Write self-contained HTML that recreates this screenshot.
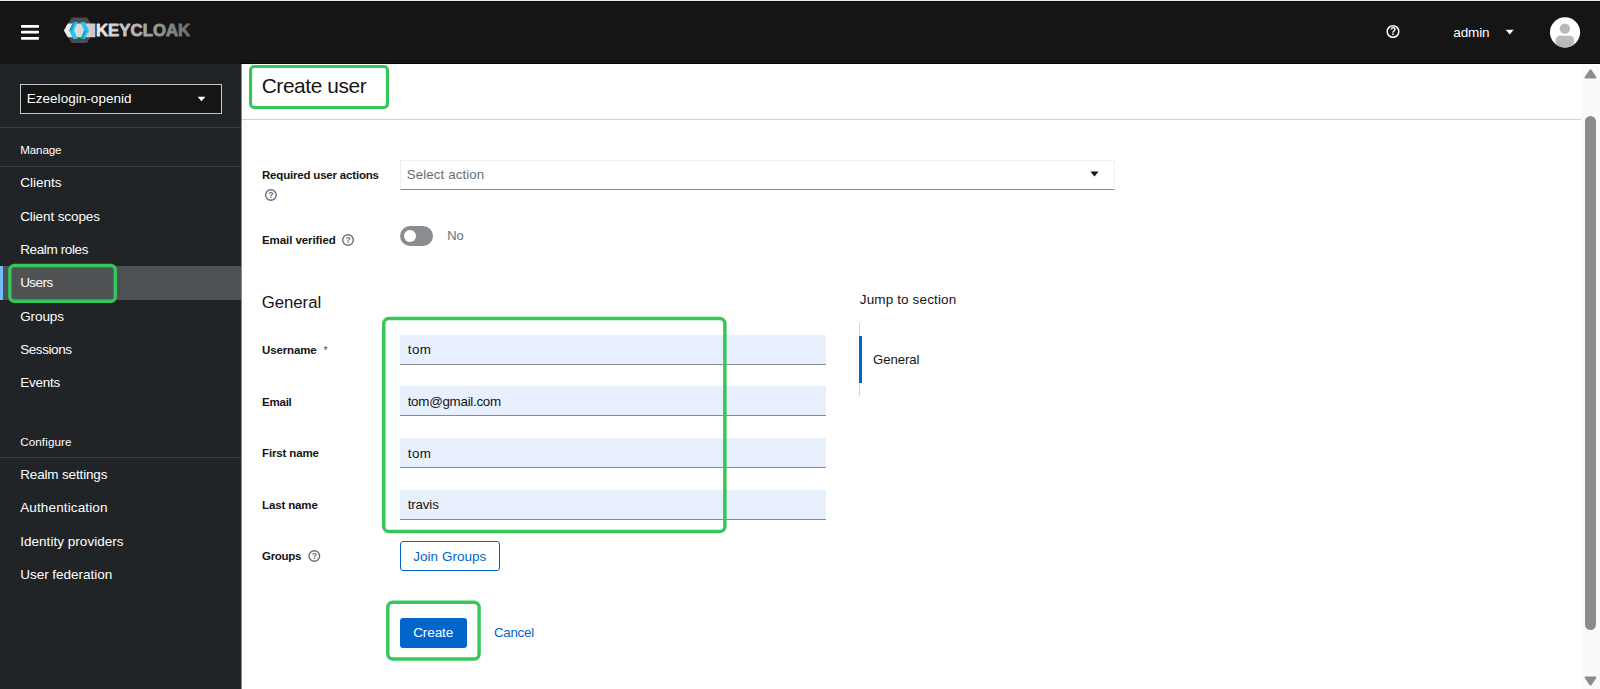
<!DOCTYPE html>
<html lang="en">
<head>
<meta charset="utf-8">
<title>Create user - Keycloak</title>
<style>
*{box-sizing:border-box;margin:0;padding:0}
html,body{width:1600px;height:689px;overflow:hidden;background:#fff;font-family:"Liberation Sans",sans-serif;color:#151515}
.abs{position:absolute}
.t{position:absolute;white-space:nowrap;line-height:1;font-family:"Liberation Sans",sans-serif}
.hr{position:absolute;left:0;width:241px;height:1px;background:#3c3f42}
.inp{position:absolute;left:400px;width:425.5px;height:30px;background:#e8f0fe;border-bottom:1px solid #8a8d90}
svg{position:absolute;overflow:visible}
</style>
</head>
<body>
<div class="abs" style="left:0;top:0;width:1600px;height:1px;background:#ececec"></div>
<div class="abs" style="left:0;top:1px;width:1600px;height:1px;background:#090909;z-index:1"></div>
<div class="abs" style="left:0;top:1px;width:1600px;height:62.5px;background:#151515"></div>
<div class="abs" style="left:241px;top:63px;width:1359px;height:1px;background:#040404"></div>
<div class="abs" style="left:0;top:63.5px;width:241px;height:626px;background:#212427"></div>
<div class="abs" style="left:241px;top:64px;width:1px;height:625px;background:#8a8a8a"></div>

<!-- hamburger + logo + header right, drawn in page coordinates -->
<svg style="left:0;top:0" width="1600" height="64" viewBox="0 0 1600 64">
<defs>
<linearGradient id="lg" gradientUnits="userSpaceOnUse" x1="96" x2="191" y1="0" y2="0"><stop offset="0" stop-color="#ececec"/><stop offset="0.35" stop-color="#bdbdbd"/><stop offset="0.7" stop-color="#8f8f8f"/><stop offset="1" stop-color="#6a6a6a"/></linearGradient>
<linearGradient id="bandg" gradientUnits="userSpaceOnUse" x1="64" x2="96" y1="0" y2="0"><stop offset="0" stop-color="#f2f2f2"/><stop offset="0.5" stop-color="#d8d8d8"/><stop offset="1" stop-color="#c6c6c6"/></linearGradient>
<clipPath id="av"><circle cx="1565.05" cy="32.35" r="15.1"/></clipPath>
</defs>
<rect x="21" y="25" width="18" height="2.8" rx="0.8" fill="#fff"/>
<rect x="21" y="30.8" width="18" height="2.8" rx="0.8" fill="#fff"/>
<rect x="21" y="37" width="18" height="2.8" rx="0.8" fill="#fff"/>
<polygon points="64.2,30.3 71.7,17.6 87,17.6 94.4,30.3 87,43 71.7,43" fill="#4c4c4c"/>
<polygon points="63.9,30.4 67.8,23.6 95.4,23.6 95.4,37.2 67.8,37.2" fill="url(#bandg)"/>
<polygon points="73.3,21.9 77.5,21.9 74.1,30.5 77.5,39 73.3,39 69.1,30.5" fill="#2cc4ea"/>
<polygon points="73.3,21.9 75.3,21.9 71.5,30.5 69.1,30.5" fill="#0b9fc8"/>
<polygon points="80.5,21.9 84.7,21.9 89.1,30.5 84.7,39 80.5,39 84.2,30.5" fill="#2cc4ea"/>
<polygon points="84.2,30.5 86.6,30.5 82.6,39 80.5,39" fill="#0b9fc8"/>
<text x="96" y="36.3" font-family="Liberation Sans, sans-serif" font-weight="bold" font-size="16.6" fill="url(#lg)" stroke="url(#lg)" stroke-width="0.8" stroke-linejoin="round" textLength="94.2" lengthAdjust="spacingAndGlyphs">KEYCLOAK</text>
<circle cx="1393" cy="31.5" r="5.8" fill="none" stroke="#fff" stroke-width="1.5"/>
<text x="1393" y="35.2" text-anchor="middle" font-family="Liberation Sans, sans-serif" font-weight="bold" font-size="10" fill="#fff">?</text>
<polygon points="1505.7,29.8 1513.7,29.8 1509.7,34.4" fill="#fff"/>
<circle cx="1565.05" cy="32.35" r="15.1" fill="#fff"/>
<g clip-path="url(#av)"><circle cx="1564.9" cy="28.6" r="5.2" fill="#b9b9b9"/><path d="M1555.7 48 v-8 a4.2 4.2 0 0 1 4.2 -4.2 h10 a4.2 4.2 0 0 1 4.2 4.2 v8z" fill="#bbbbbb"/><path d="M1558.6 48 l1.6 -5.5 M1571.2 48 l-1.6 -5.5" stroke="#adadad" stroke-width="0.9" fill="none"/></g>
</svg>

<!-- realm selector -->
<div class="abs" style="left:20px;top:84px;width:201.5px;height:30px;background:#151515;border:1px solid #c4c6c8"></div>
<svg style="left:197px;top:96px" width="9" height="6" viewBox="0 0 9 6"><polygon points="0.6,0.7 8.4,0.7 4.5,5.2" fill="#fff"/></svg>

<div class="hr" style="top:127px"></div>
<div class="hr" style="top:166px"></div>
<div class="abs" style="left:0;top:266px;width:241px;height:34px;background:#4f5255"></div>
<div class="abs" style="left:0;top:266px;width:3px;height:34px;background:#73bcf7"></div>
<div class="hr" style="top:457px"></div>

<!-- content -->
<div class="abs" style="left:242px;top:119px;width:1339px;height:1px;background:#d2d2d2"></div>

<div class="abs" style="left:400px;top:160px;width:714.5px;height:30px;background:#fff;border:1px solid #f0f0f0;border-bottom:1px solid #8a8d90"></div>
<svg style="left:1090px;top:171px" width="9" height="6" viewBox="0 0 9 6"><polygon points="0.4,0.6 8.6,0.6 4.5,5.4" fill="#151515"/></svg>

<div class="abs" style="left:400px;top:226px;width:33px;height:20px;border-radius:10px;background:#8a8d90"></div>
<div class="abs" style="left:403.7px;top:230px;width:12px;height:12px;border-radius:6px;background:#fff"></div>

<div class="inp" style="top:335px"></div>
<div class="inp" style="top:386px"></div>
<div class="inp" style="top:438px"></div>
<div class="inp" style="top:490px"></div>

<div class="abs" style="left:400px;top:541.3px;width:100px;height:30px;border:1px solid #0066cc;border-radius:3px;background:#fff"></div>
<div class="abs" style="left:400px;top:618px;width:66.5px;height:30px;border-radius:3px;background:#0066cc"></div>

<!-- help icons -->
<svg style="left:0;top:0" width="400" height="600" viewBox="0 0 400 600">
<g fill="none" stroke="#6a6e73" stroke-width="1.4"><circle cx="270.9" cy="195" r="5.3"/><circle cx="348" cy="240" r="5.3"/><circle cx="314.3" cy="556" r="5.3"/></g>
<g font-family="Liberation Sans, sans-serif" font-weight="bold" font-size="8.6" fill="#6a6e73" text-anchor="middle"><text x="270.9" y="198.2">?</text><text x="348" y="243.2">?</text><text x="314.3" y="559.2">?</text></g>
</svg>

<!-- jump to section -->
<div class="abs" style="left:859px;top:323px;width:1px;height:73px;background:#d2d2d2"></div>
<div class="abs" style="left:859px;top:336.3px;width:3px;height:46.7px;background:#0066cc"></div>

<!-- scrollbar -->
<div class="abs" style="left:1581px;top:65px;width:19px;height:624px;background:#fafafa"></div>
<div class="abs" style="left:1585px;top:116px;width:11px;height:514px;border-radius:5.5px;background:#8b8b8b"></div>
<svg style="left:1584px;top:69px" width="13" height="10" viewBox="0 0 13 10"><path d="M1.8 8.4 L6.5 1.6 L11.2 8.4z" fill="#8b8b8b" stroke="#8b8b8b" stroke-width="2.4" stroke-linejoin="round"/></svg>
<svg style="left:1584px;top:676px" width="13" height="10" viewBox="0 0 13 10"><path d="M1.8 1.6 L6.5 8.2 L11.2 1.6z" fill="#8b8b8b" stroke="#8b8b8b" stroke-width="2.4" stroke-linejoin="round"/></svg>

<svg style="left:0;top:0" width="800" height="689" viewBox="0 0 800 689"><g fill="none" stroke="#34c759"><rect x="9.90" y="265.50" width="105.40" height="35.80" rx="4.5" ry="4.5" stroke-width="3.4"/><rect x="250.55" y="66.55" width="136.90" height="40.90" rx="3.5" ry="3.5" stroke-width="3.1"/><rect x="383.75" y="318.55" width="341.10" height="212.90" rx="5" ry="5" stroke-width="3.5"/><rect x="387.80" y="602.20" width="91.30" height="56.80" rx="5" ry="5" stroke-width="3.4"/></g></svg>
<div class="t" style="left:1453.30px;top:26.37px;font-size:13.5px;color:#ffffff;letter-spacing:-0.120px">admin</div>
<div class="t" style="left:26.70px;top:91.87px;font-size:13.5px;color:#ffffff;letter-spacing:0.037px">Ezeelogin-openid</div>
<div class="t" style="left:20.20px;top:144.18px;font-size:11.6px;color:#ffffff;letter-spacing:-0.121px">Manage</div>
<div class="t" style="left:20.20px;top:175.87px;font-size:13.5px;color:#ffffff;letter-spacing:0.006px">Clients</div>
<div class="t" style="left:20.20px;top:209.87px;font-size:13.5px;color:#ffffff;letter-spacing:-0.104px">Client scopes</div>
<div class="t" style="left:20.20px;top:242.57px;font-size:13.5px;color:#ffffff;letter-spacing:-0.373px">Realm roles</div>
<div class="t" style="left:20.20px;top:275.57px;font-size:13.5px;color:#ffffff;letter-spacing:-0.566px">Users</div>
<div class="t" style="left:20.20px;top:309.87px;font-size:13.5px;color:#ffffff;letter-spacing:-0.096px">Groups</div>
<div class="t" style="left:20.20px;top:342.57px;font-size:13.5px;color:#ffffff;letter-spacing:-0.426px">Sessions</div>
<div class="t" style="left:20.20px;top:375.87px;font-size:13.5px;color:#ffffff;letter-spacing:-0.236px">Events</div>
<div class="t" style="left:20.20px;top:435.88px;font-size:11.6px;color:#ffffff;letter-spacing:0.127px">Configure</div>
<div class="t" style="left:20.20px;top:467.57px;font-size:13.5px;color:#ffffff;letter-spacing:-0.154px">Realm settings</div>
<div class="t" style="left:20.20px;top:500.87px;font-size:13.5px;color:#ffffff;letter-spacing:0.134px">Authentication</div>
<div class="t" style="left:20.20px;top:534.87px;font-size:13.5px;color:#ffffff;letter-spacing:0.035px">Identity providers</div>
<div class="t" style="left:20.20px;top:567.57px;font-size:13.5px;color:#ffffff;letter-spacing:-0.015px">User federation</div>
<div class="t" style="left:261.70px;top:76.01px;font-size:20.9px;color:#151515;letter-spacing:-0.416px">Create user</div>
<div class="t" style="left:262.00px;top:170.27px;font-size:11.5px;color:#151515;font-weight:bold;letter-spacing:-0.190px">Required user actions</div>
<div class="t" style="left:262.00px;top:234.87px;font-size:11.5px;color:#151515;font-weight:bold;letter-spacing:-0.077px">Email verified</div>
<div class="t" style="left:406.70px;top:167.74px;font-size:13.3px;color:#6a6e73;letter-spacing:0.113px">Select action</div>
<div class="t" style="left:447.20px;top:228.80px;font-size:13px;color:#6a6e73;letter-spacing:-0.125px">No</div>
<div class="t" style="left:261.70px;top:295.48px;font-size:16.8px;color:#151515;letter-spacing:-0.034px">General</div>
<div class="t" style="left:262.00px;top:344.87px;font-size:11.5px;color:#151515;font-weight:bold;letter-spacing:-0.132px">Username<span style="color:#c9190b;font-weight:normal;letter-spacing:0;position:absolute;left:61.5px;top:0.5px;font-size:11px">*</span></div>
<div class="t" style="left:262.00px;top:396.57px;font-size:11.5px;color:#151515;font-weight:bold;letter-spacing:-0.222px">Email</div>
<div class="t" style="left:262.00px;top:448.17px;font-size:11.5px;color:#151515;font-weight:bold;letter-spacing:-0.130px">First name</div>
<div class="t" style="left:262.00px;top:499.87px;font-size:11.5px;color:#151515;font-weight:bold;letter-spacing:-0.136px">Last name</div>
<div class="t" style="left:262.00px;top:551.27px;font-size:11.5px;color:#151515;font-weight:bold;letter-spacing:-0.298px">Groups</div>
<div class="t" style="left:407.70px;top:343.26px;font-size:13.4px;color:#151515;letter-spacing:0.486px">tom</div>
<div class="t" style="left:407.70px;top:394.96px;font-size:13.4px;color:#151515;letter-spacing:-0.286px">tom@gmail.com</div>
<div class="t" style="left:407.70px;top:446.56px;font-size:13.4px;color:#151515;letter-spacing:0.486px">tom</div>
<div class="t" style="left:407.70px;top:498.26px;font-size:13.4px;color:#151515;letter-spacing:-0.160px">travis</div>
<div class="t" style="left:413.20px;top:550.47px;font-size:13.5px;color:#0066cc;letter-spacing:0.040px">Join Groups</div>
<div class="t" style="left:413.20px;top:626.27px;font-size:13.5px;color:#ffffff;letter-spacing:-0.086px">Create</div>
<div class="t" style="left:493.90px;top:626.44px;font-size:13.3px;color:#0066cc;letter-spacing:-0.238px">Cancel</div>
<div class="t" style="left:859.80px;top:293.37px;font-size:13.5px;color:#151515;letter-spacing:0.132px">Jump to section</div>
<div class="t" style="left:873.00px;top:352.63px;font-size:13.2px;color:#151515;letter-spacing:-0.070px">General</div>
</body>
</html>
